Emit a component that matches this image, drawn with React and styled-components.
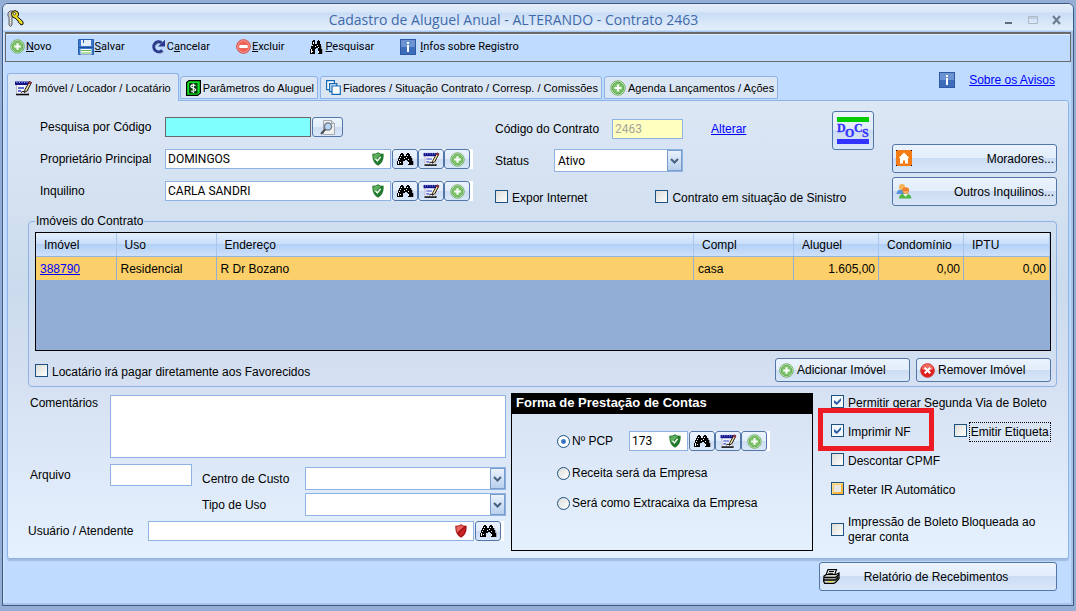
import React from 'react'
import { useState } from 'react';
import styled, { createGlobalStyle, css } from "styled-components";

const GlobalStyle = createGlobalStyle`
  *, *::after {
    box-sizing: border-box;
  }
  body {
    margin: 0;
    background: #94aed6;
    font-family: "Liberation Sans", Arial, sans-serif;
    font-size: 12px;
    line-height: 16px;
    color: #000;
  }
  button, input, select, textarea {
    font: inherit;
    color: inherit;
    margin: 0;
  }
  svg {
    display: block;
    flex: none;
  }
`;

/* ---------- window ---------- */

const Page = styled.div`
  min-height: 100vh;
  padding: 3px 2px 5px;
  display: flex;
  flex-direction: column;
`;

const Window = styled.main`
  flex: 1;
  display: flex;
  flex-direction: column;
  background: #bfdbff;
  border: 1px solid #3b5a82;
  border-radius: 6px 6px 0 0;
  box-shadow: inset -2px -2px 0 #a9c3e6, inset 1px 0 0 #d5e6fb;
  padding-bottom: 13px;
`;

const TitleBar = styled.header`
  height: 28px;
  display: grid;
  grid-template-columns: 18px 1fr 60px;
  align-items: center;
  padding: 0 11px 0 4px;
  border-radius: 5px 5px 0 0;
  background: linear-gradient(#e6effa 0, #d9e7f8 8px, #c9ddf6 9px, #e4eefb 26px, #a8c8f2 27px);
`;

const Title = styled.h1`
  margin: 0;
  padding-top: 3px;
  text-align: center;
  font-family: "Open Sans", sans-serif;
  font-size: 14px;
  font-weight: 400;
  line-height: 20px;
  color: #3e6aaa;
`;

const WindowControls = styled.div`
  display: flex;
  justify-content: flex-end;
  gap: 14px;
  padding-top: 3px;
`;

const ControlButton = styled.button`
  padding: 0;
  border: none;
  background: none;
`;

const Toolbar = styled.nav`
  height: 30px;
  margin: 0 2px;
  padding: 0 4px 2px;
  display: flex;
  align-items: center;
  gap: 26px;
  border: 1px solid #696969;
  border-top: 2px solid #696969;
  box-shadow: inset 0 1px 0 #e4effd;
`;

const ToolButton = styled.button`
  display: flex;
  align-items: center;
  gap: ${(props) => props.$gap || 1}px;
  padding: 0;
  border: none;
  background: none;
  font-family: Roboto, sans-serif;
  font-size: 11px;
`;

/* ---------- tabs ---------- */

const TabRow = styled.div`
  display: flex;
  align-items: flex-end;
  height: 38px;
  margin: 0 4px;
`;

const Tab = styled.button`
  display: flex;
  align-items: center;
  gap: 2px;
  height: 23px;
  margin: 0 2px 1px 0;
  padding: 0 3px 0 5px;
  border: 1px solid #8db2e3;
  border-radius: 3px 3px 0 0;
  background: #dbe6f4;
  font-size: 11px;
  ${(props) => props.$active && css`
    gap: 3px;
    height: 28px;
    margin: 0 1px -1px 0;
    padding: 0 7px;
    border-bottom: none;
    z-index: 1;
  `}
`;

const Notices = styled.div`
  display: flex;
  align-items: center;
  align-self: flex-start;
  gap: 14px;
  margin: 10px 14px 0 auto;
`;

const Link = styled.a`
  color: #0000ff;
  text-decoration: underline;
`;

const Panel = styled.section`
  margin: 0 4px 0;
  padding: 10px 11px 7px 20px;
  border: 1px solid #8db2e3;
  border-radius: 0 3px 3px 3px;
  background: linear-gradient(#dce7f5 0, #cbdbed 190px, #d4e0f1 270px, #e5f1fe 100%);
  box-shadow: 0 2px 1px #a3bbdc;
`;

const Label = styled.label`
  width: ${(props) => (props.$w ? `${props.$w}px` : "auto")};
  flex: none;
  white-space: nowrap;
`;

const Row = styled.div`
  display: flex;
  align-items: center;
  gap: ${(props) => props.$gap || 0}px;
`;

const TopForm = styled.div`
  display: grid;
  grid-template-columns: 455px 1fr 60px 165px;
  padding-left: 12px;
  height: 103px;
`;

const Column = styled.div`
  display: flex;
  flex-direction: column;
  gap: ${(props) => props.$gap}px;
  padding-top: ${(props) => props.$top || 0}px;
  min-width: 0;
`;

const CheckRow = styled(Row)`
  padding-top: 8px;
  white-space: nowrap;
`;

const Input = styled.input`
  width: ${(props) => (props.$w ? `${props.$w}px` : "100%")};
  height: ${(props) => props.$h || 20}px;
  padding: 0 2px;
  border: 1px solid #8db2e3;
  border-radius: 0;
  background: #fff;
  font-family: Roboto, sans-serif;
  outline: none;
  &:disabled {
    background: #ffffc0;
    color: #a5a59c;
  }
`;

const SearchInput = styled(Input)`
  background: #80ffff;
  border-color: #696969;
`;

const LookupBox = styled.div`
  display: flex;
  align-items: center;
  width: ${(props) => props.$w}px;
  height: 20px;
  padding-right: 6px;
  border: 1px solid #8db2e3;
  background: #fff;
  ${Input} {
    flex: 1;
    min-width: 0;
    height: 18px;
    border: none;
  }
`;

const ButtonStrip = styled.div`
  display: flex;
  padding-right: 3px;
  background: #fff;
`;

const Button = styled.button`
  display: flex;
  align-items: center;
  border: 1px solid #5376a9;
  border-radius: 3px;
  background: linear-gradient(#eaf3fe 0, #e3edfb 49%, #ccdcf2 50%, #d9e7f9 100%);
`;

const IconButton = styled(Button)`
  width: ${(props) => props.$w || 26}px;
  height: 20px;
  padding: 0;
  justify-content: center;
`;

const DocsButton = styled(Button)`
  width: 42px;
  height: 39px;
  padding: 0;
  justify-content: center;
`;

const WideButton = styled(Button)`
  height: 29px;
  padding: 0 2px 0 3px;
  justify-content: space-between;
  svg {
    margin-bottom: 2px;
  }
`;

const SmallButton = styled(Button)`
  width: 135px;
  height: 24px;
  padding: 0 3px;
  gap: 3px;
`;

const SelectWrap = styled.div`
  display: grid;
  width: ${(props) => (props.$w ? `${props.$w}px` : "100%")};
  height: 23px;
`;

const Select = styled.select`
  grid-area: 1 / 1;
  appearance: none;
  width: 100%;
  padding: 0 18px 0 3px;
  border: 1px solid #8db2e3;
  border-radius: 0;
  background: #fff;
  font-family: Roboto, sans-serif;
  outline: none;
`;

const SelectArrow = styled.span`
  grid-area: 1 / 1;
  justify-self: end;
  display: flex;
  align-items: center;
  justify-content: center;
  width: 15px;
  margin: 1px;
  border: 1px solid #7a9cc8;
  background: linear-gradient(#eaf2fc, #b9d0ee);
  pointer-events: none;
`;

const CheckLabel = styled.label`
  display: flex;
  align-items: flex-start;
  gap: 4px;
`;

const CheckText = styled.span`
  padding-top: 1px;
  line-height: 15px;
  outline: ${(props) => (props.$focused ? "1px dotted #000" : "none")};
  outline-offset: 1px;
`;

const Checkbox = styled.input.attrs({ type: "checkbox" })`
  appearance: none;
  flex: none;
  width: 13px;
  height: 13px;
  border: 1px solid #1c5180;
  background: linear-gradient(135deg, #dcdcd7, #fff);
  align-self: ${(props) => props.$align || "flex-start"};
  ${(props) => props.$hot && css`
    background: #e6e6e2;
    box-shadow: inset 1px 1px 0 #fddf94, inset -1px -1px 0 #f8b636, inset 2px 2px 0 #fbcb69, inset -2px -2px 0 #f8b636;
  `}
  &:checked {
    background: #f4f9ff;
  }
  &:checked::after {
    content: "";
    display: block;
    width: 7px;
    height: 7px;
    margin: 2px;
    background: #2f5fa8;
    clip-path: polygon(0 30%, 40% 62%, 100% 0, 100% 40%, 40% 100%, 0 70%);
  }
`;

const RadioLabel = styled.label`
  display: flex;
  align-items: center;
  gap: 2px;
`;

const Radio = styled.input.attrs({ type: "radio" })`
  appearance: none;
  width: 13px;
  height: 13px;
  border: 1px solid #1c5180;
  border-radius: 50%;
  background: linear-gradient(135deg, #dcdcd7, #fff);
  &:checked {
    background: radial-gradient(circle, #2a62b8 0, #4a82cc 2px, #fff 3px);
  }
`;

/* ---------- table ---------- */

const Group = styled.fieldset`
  margin: 0;
  padding: 4px 5px 4px 6px;
  min-width: 0;
  border: 1px solid #8db2e3;
  border-radius: 4px;
`;

const Legend = styled.legend`
  padding: 0 1px;
  line-height: 14px;
`;

const TableBox = styled.div`
  min-height: 119px;
  border: 1px solid #000;
  background: #92aed6;
`;

const Table = styled.table`
  width: 100%;
  border-collapse: collapse;
  table-layout: fixed;
`;

const Th = styled.th`
  width: ${(props) => (props.$w ? `${props.$w}px` : "auto")};
  height: 23px;
  padding: 2px 8px 0;
  text-align: left;
  font-weight: 400;
  border-right: 1px solid #a9c6ec;
  border-bottom: 1px solid #94b4e0;
  background: linear-gradient(#e3eefc 0, #c9defa 49%, #b2d0f6 50%, #cde0fa 100%);
`;

const Td = styled.td`
  height: 24px;
  padding: 2px 3px 0 4px;
  text-align: ${(props) => props.$align || "left"};
  border-right: 1px solid #92aed6;
  background: #fbd06a;
`;

const GroupFooter = styled.div`
  display: flex;
  align-items: center;
  gap: 6px;
  margin-top: 7px;
  ${CheckLabel} {
    margin-right: auto;
    padding-top: 4px;
  }
`;

/* ---------- lower part ---------- */

const Bottom = styled.div`
  display: grid;
  grid-template-columns: minmax(0, 478px) minmax(0, 302px) 1fr;
  column-gap: 5px;
  margin-top: 6px;
`;

const Comments = styled.textarea`
  flex: 1;
  height: 63px;
  resize: none;
  border: 1px solid #8db2e3;
  border-radius: 0;
  outline: none;
`;

const CommentRow = styled.div`
  display: flex;
  align-items: flex-start;
  padding: 2px 0 0 2px;
`;

const FileRow = styled.div`
  display: flex;
  align-items: flex-start;
  gap: 10px;
  padding: 6px 0 0 2px;
`;

const CostGrid = styled.div`
  flex: 1;
  display: grid;
  grid-template-columns: 103px 1fr;
  row-gap: 3px;
  align-items: center;
  padding-top: 3px;
`;

const UserRow = styled.div`
  display: flex;
  align-items: center;
  padding-top: 5px;
`;

const AccountBox = styled.section`
  border: 1px solid #000;
  height: 158px;
`;

const AccountTitle = styled.h2`
  margin: 0;
  padding: 0 4px;
  height: 20px;
  font-size: 13px;
  line-height: 18px;
  color: #fff;
  background: #000;
`;

const AccountOptions = styled.div`
  display: flex;
  flex-direction: column;
  gap: 14px;
  padding: 17px 0 0 45px;
`;

const Options = styled.div`
  display: flex;
  flex-direction: column;
  gap: 13px;
  padding: 2px 0 0 13px;
  > ${CheckLabel}:last-child {
    padding-top: 3px;
  }
`;

const Marked = styled.div`
  position: relative;
  &::after {
    content: "";
    position: absolute;
    left: -13px;
    top: -16px;
    width: 116px;
    height: 43px;
    border: 5px solid #ed1c24;
    pointer-events: none;
  }
`;

const Footer = styled.footer`
  display: flex;
  justify-content: flex-end;
  margin: 3px 16px 0;
`;

const ReportButton = styled(Button)`
  width: 238px;
  height: 29px;
  padding: 0 24px 0 3px;
  span {
    flex: 1;
    text-align: center;
  }
`;

/* ---------- icons ---------- */

const PlusIcon = ({ size = 15 }) => (
  <svg width={size} height={size} viewBox="0 0 16 16">
    <circle cx="8" cy="8" r="7.2" fill="#e3f2dd" stroke="#69ab5c" />
    <circle cx="8" cy="8" r="5.7" fill="#7cc268" stroke="#5aa84a" />
    <path d="M8 4.500v7M4.500 8h7" stroke="#fff" strokeWidth="2.200" />
  </svg>
);

const MinusIcon = () => (
  <svg width="15" height="15" viewBox="0 0 16 16">
    <circle cx="8" cy="8" r="7.300" fill="#e0463c" stroke="#d5493f" />
    <circle cx="8" cy="8" r="6.200" fill="#ee6156" stroke="#f9a9a2" />
    <rect x="3.500" y="6.500" width="9" height="3.200" rx="0.600" fill="#fff" />
  </svg>
);

const RemoveIcon = () => (
  <svg width="15" height="15" viewBox="0 0 16 16">
    <circle cx="8" cy="8" r="7.300" fill="#e01f1f" stroke="#c33" />
    <path d="M2 7a6 6 0 0 1 12 0q-6 2-12 0z" fill="#f46a62" />
    <path d="M5 5l6 6M11 5l-6 6" stroke="#fff" strokeWidth="2.200" />
  </svg>
);

const SaveIcon = () => (
  <svg width="16" height="16" viewBox="0 0 16 16">
    <path d="M0.500 0.500h15v15h-15z" fill="#3b78d0" stroke="#2a5cae" />
    <rect x="3" y="1" width="10" height="6" fill="#e3effb" />
    <path d="M5.500 1v3" stroke="#2a5cae" />
    <path d="M1 8.500h14" stroke="#1d4c98" />
    <rect x="2.500" y="10" width="11" height="5.500" fill="#fff" />
    <path d="M3 11.500h10M3 14h10" stroke="#62b84c" strokeWidth="1.200" />
  </svg>
);

const CancelIcon = () => (
  <svg width="15" height="15" viewBox="0 0 15 15">
    <path d="M11.200 11.200A5 5 0 1 1 10.500 3.600" fill="none" stroke="#9da7c4" strokeWidth="2.400" transform="translate(1 1)" />
    <path d="M11.200 11.200A5 5 0 1 1 10.500 3.600" fill="none" stroke="#2b3a8c" strokeWidth="2.800" />
    <path d="M7 7.500h7V0.800z" fill="#2b3a8c" />
  </svg>
);

const BinocularsIcon = ({ width = 17, height = 12, fit }) => (
  <svg width={width} height={height} viewBox="0 0 17 12" shapeRendering="crispEdges" preserveAspectRatio={fit}>
    <path d="M14 3h1v2h1v3h1v4h-3z" fill="#9aa0ad" />
    <path d="M3 1h1V0h2v1h1v2h2V1h1V0h2v1h1v2h1v2h1v3h1v4h-5V8h-1V7H8v1H6v4H0V8h1V5h1V3h1z" fill="#000" />
    <path d="M4 2h1v1H4zM3 4h1v1H3zM2 6h1v1H2zM1 8h1v3H1zM3 9h1v1H3zM10 2h1v1h-1zM9 4h1v1H9zM11 6h1v1h-1zM11 9h1v2h-1zM7 5h1v1H7z" fill="#fff" />
  </svg>
);

const InfoIcon = () => (
  <svg width="16" height="16" viewBox="0 0 16 16">
    <rect x="0.500" y="0.500" width="15" height="15" fill="#3d6cbb" stroke="#3059a5" />
    <rect x="1" y="1" width="14" height="7" fill="#6b93d2" />
    <path d="M7 3h2v2H7zM7 6h2v7H7z" fill="#fff" />
  </svg>
);

const FormIcon = ({ width = 17, height = 15 }) => (
  <svg width={width} height={height} viewBox="0 0 17 15">
    <path d="M1 3h12v11H1z" fill="#f2f2fa" />
    <path d="M13 5v9M1.500 4v9" stroke="#b9b9c8" />
    <path d="M0 1h14v3.500H0z" fill="#14148c" />
    <path d="M1.500 2h1M4 2h1M6.500 2h1M9 2h1M11.500 2h1" stroke="#b5b9f2" />
    <path d="M3 7.500h6M3 10.500h3" stroke="#2f45c8" strokeWidth="1.300" />
    <path d="M1 14h13" stroke="#000" strokeWidth="1.600" />
    <path d="M14.500 1l2 1-4.500 8.500-2.500 1.500.5-3z" fill="#f0dfa0" stroke="#000" strokeWidth="0.900" />
    <path d="M14.300 1l2.300 1.200-1 1.800-2.300-1.200z" fill="#a8283c" />
    <path d="M6 12q2-2 3.500-.5" stroke="#000" fill="none" />
  </svg>
);

const MoneyIcon = () => (
  <svg width="15" height="16" viewBox="0 0 15 16">
    <path d="M3 0.600h11.400V13L11.500 15.400H0.600V2.500z" fill="#12e022" stroke="#000" strokeWidth="1.200" />
    <rect x="3" y="3" width="8.500" height="10.500" fill="#0a3d10" />
    <path d="M9.500 5.800Q7 4 5.300 5.500T7.300 8.200 9 10.600 5 11M7.300 3.500v9.500" stroke="#fff" fill="none" strokeWidth="1.100" />
  </svg>
);

const CopiesIcon = () => (
  <svg width="15" height="15" viewBox="0 0 15 15" fill="#fff" stroke="#1469b5" strokeWidth="1.200">
    <path d="M0.600 0.600h7.800v9H0.600z" />
    <path d="M3.600 3.600h7.200v8H3.600z" fill="#d8ecff" />
    <path d="M6 6h8.300v8.300H6z" />
  </svg>
);

const PreviewIcon = () => (
  <svg width="16" height="15" viewBox="0 0 16 15">
    <path d="M3.500 0.500h8l3 3v11h-11z" fill="#f0f0f0" stroke="#a4a8ad" />
    <path d="M11.500 0.500v3h3" fill="#ddd" stroke="#a4a8ad" />
    <circle cx="8" cy="6.500" r="3.600" fill="#b6d3f2" stroke="#6d7784" strokeWidth="1.300" />
    <path d="M5.300 9.300L1 14" stroke="#4a4f58" strokeWidth="2" />
  </svg>
);

const ShieldIcon = ({ red }) => (
  <svg width="12" height="14" viewBox="0 0 12 14">
    <path d="M6 0.300Q8.500 2 11.600 1.800 12.300 10 6 13.700-.3 10 .4 1.800 3.500 2 6 .3z" fill={red ? "#a81414" : "#237a2d"} />
    <path d="M6 1.300Q3.500 2.800 1.400 2.700 1 6 2.300 8.500L9 2.400Q7.500 2.200 6 1.300z" fill={red ? "#e8655f" : "#62ae60"} />
    {red
      ? <path d="M6 12.300q4-3 4.300-8.500L4 9.500q.8 1.800 2 2.800z" fill="#cc2626" />
      : <path d="M3.500 6.700l1.900 2.200L8.600 4.800" stroke="#f2fbf0" strokeWidth="1.500" fill="none" />}
  </svg>
);

const HouseIcon = () => (
  <svg width="16" height="16" viewBox="0 0 16 16">
    <rect width="16" height="16" fill="#f57c14" />
    <path d="M0 0h1v1H0zM15 0h1v1h-1zM0 15h1v1H0zM15 15h1v1h-1z" fill="#000" />
    <path d="M8 2.500L2.800 8H4v5.500h3v-3h2v3h3V8h1.200z" fill="#fff" />
  </svg>
);

const PeopleIcon = () => (
  <svg width="16" height="16" viewBox="0 0 16 16">
    <path d="M0.500 11q.5-5 5-4.500 3 0 3.500 4.500z" fill="#5b93d8" />
    <circle cx="6" cy="4" r="3" fill="#f5b355" />
    <path d="M3 15.500q0-5 6-5t6.500 5z" fill="#4fb848" />
    <path d="M7 11l2.500 3L12 11z" fill="#e9f7e4" />
    <circle cx="9.800" cy="7.500" r="3.300" fill="#f07d2c" />
    <path d="M7 8q3 .8 5.300-.5-.5 3-2.600 3.200Q7.500 10.700 7 8z" fill="#f9b06a" />
  </svg>
);

const PrinterIcon = () => (
  <svg width="17" height="15" viewBox="0 0 17 15">
    <path d="M5 0.600h8.500L11.500 6H3z" fill="#fff" stroke="#000" strokeWidth="1.200" />
    <path d="M6 2.500h5M5.300 4.300h5" stroke="#000" />
    <path d="M1 7l2.500-1.500H13L16 4v5.500L13 13l-2 1.400H1.700L.6 12z" fill="#d4d4cc" stroke="#000" strokeWidth="1.200" />
    <path d="M1 8.500h11.500L16 5.500M1 11h11.500l3-3" stroke="#000" fill="none" strokeWidth="1.300" />
    <path d="M5 12.700h5" stroke="#e8e23a" strokeWidth="1.200" />
  </svg>
);

const KeysIcon = () => (
  <svg width="17" height="17" viewBox="0 0 17 17">
    <path d="M1 3l2-2h3l1 2v3L5 7v8L3.500 16.500 2 15V7.500L1 6z" fill="#c4c4c4" stroke="#555" strokeWidth="0.900" />
    <path d="M3.500 8v6" stroke="#fff" strokeDasharray="1 1" />
    <path d="M5 2l3-1.500L11 2l.5 3-1 1.700 5.500 5v2.500l-2 .8-1.500-2-1-.5-.5-1.700L8 8 5.500 7 4.500 4.500z" fill="#eadb20" stroke="#111" strokeWidth="1" />
    <circle cx="7.500" cy="3.700" r="1.200" fill="#fff" stroke="#111" strokeWidth="0.700" />
  </svg>
);

const DocsIcon = () => (
  <svg width="32" height="28" viewBox="0 0 32 28" fontFamily="Liberation Serif, serif" fontWeight="700" fontSize="12" fill="#3333ff" stroke="#3333ff" strokeWidth="0.3">
    <rect width="32" height="5" fill="#00cc00" stroke="none" />
    <rect y="22" width="32" height="5" stroke="none" />
    <text x="0" y="15">D</text>
    <text x="8" y="20">O</text>
    <text x="17" y="15">C</text>
    <text x="25" y="20">S</text>
  </svg>
);

const ArrowIcon = () => (
  <svg width="9" height="6" viewBox="0 0 9 6">
    <path d="M1 1l3.500 3.500L8 1" fill="none" stroke="#46617f" strokeWidth="2" />
  </svg>
);

/* ---------- parts ---------- */

const Check = ({ text, focused, ...rest }) => (
  <CheckLabel>
    <Checkbox {...rest} />
    <CheckText $focused={focused}>{text}</CheckText>
  </CheckLabel>
);

const Lookup = ({ id, width, value, empty, short, label }) => (
  <Row $gap={1}>
    <LookupBox $w={width}>
      <Input id={id} defaultValue={value} aria-label={label} />
      <ShieldIcon red={empty} />
    </LookupBox>
    <ButtonStrip>
      <IconButton aria-label="Pesquisar"><BinocularsIcon /></IconButton>
      {!short && <IconButton aria-label="Editar"><FormIcon height={14} /></IconButton>}
      {!short && <IconButton aria-label="Novo"><PlusIcon /></IconButton>}
    </ButtonStrip>
  </Row>
);

const DropDown = ({ id, width, options }) => (
  <SelectWrap $w={width}>
    <Select id={id}>
      {options.map((o) => <option key={o}>{o}</option>)}
    </Select>
    <SelectArrow><ArrowIcon /></SelectArrow>
  </SelectWrap>
);

const tabs = [
  { text: "Imóvel / Locador / Locatário", icon: <FormIcon height={16} /> },
  { text: "Parâmetros do Aluguel", icon: <MoneyIcon /> },
  { text: "Fiadores / Situação Contrato / Corresp. / Comissões", icon: <CopiesIcon /> },
  { text: "Agenda Lançamentos / Ações", icon: <PlusIcon size={16} /> },
];

const App = () => {
  const [tab, setTab] = useState(0);

  return (
    <Page>
      <GlobalStyle />
      <Window>
        <TitleBar>
          <KeysIcon />
          <Title>Cadastro de Aluguel Anual - ALTERANDO - Contrato 2463</Title>
          <WindowControls>
            <ControlButton aria-label="Minimizar">
              <svg width="10" height="10"><path d="M1 8h7" stroke="#5d6c82" strokeWidth="2" /></svg>
            </ControlButton>
            <ControlButton aria-label="Maximizar">
              <svg width="10" height="10"><path d="M0.500 1.500h9v7h-9zM0.500 3h9" stroke="#b0b9c6" fill="none" /></svg>
            </ControlButton>
            <ControlButton aria-label="Fechar">
              <svg width="10" height="10"><path d="M1 1l7 8M8 1L1 9" stroke="#6c7b91" strokeWidth="2" /></svg>
            </ControlButton>
          </WindowControls>
        </TitleBar>

        <Toolbar>
          <ToolButton><PlusIcon /><span><u>N</u>ovo</span></ToolButton>
          <ToolButton><SaveIcon /><span><u>S</u>alvar</span></ToolButton>
          <ToolButton><CancelIcon /><span>C<u>a</u>ncelar</span></ToolButton>
          <ToolButton><MinusIcon /><span><u>E</u>xcluir</span></ToolButton>
          <ToolButton $gap={2}><BinocularsIcon width={13} height={14} fit="none" /><span><u>P</u>esquisar</span></ToolButton>
          <ToolButton $gap={4}><InfoIcon /><span><u>I</u>nfos sobre Registro</span></ToolButton>
        </Toolbar>

        <TabRow>
          {tabs.map((t, i) => (
            <Tab key={t.text} $active={tab === i} onClick={() => setTab(i)}>
              {t.icon}
              <span>{t.text}</span>
            </Tab>
          ))}
          <Notices>
            <InfoIcon />
            <Link href="#avisos">Sobre os Avisos</Link>
          </Notices>
        </TabRow>

        <Panel>
          <TopForm>
            <Column $gap={12} $top={6}>
              <Row>
                <Label $w={125} htmlFor="codigo">Pesquisa por Código</Label>
                <Row $gap={1}>
                  <SearchInput id="codigo" $w={146} />
                  <IconButton $w={31} aria-label="Visualizar"><PreviewIcon /></IconButton>
                </Row>
              </Row>
              <Row>
                <Label $w={125} htmlFor="proprietario">Proprietário Principal</Label>
                <Lookup id="proprietario" width={226} value="DOMINGOS" />
              </Row>
              <Row>
                <Label $w={125} htmlFor="inquilino">Inquilino</Label>
                <Lookup id="inquilino" width={226} value="CARLA SANDRI" />
              </Row>
            </Column>

            <Column $gap={10} $top={8}>
              <Row>
                <Label $w={117} htmlFor="contrato">Código do Contrato</Label>
                <Row $gap={28}>
                  <Input id="contrato" $w={71} defaultValue="2463" disabled />
                  <Link href="#alterar">Alterar</Link>
                </Row>
              </Row>
              <Row>
                <Label $w={59} htmlFor="status">Status</Label>
                <DropDown id="status" width={129} options={["Ativo"]} />
              </Row>
              <CheckRow $gap={68}>
                <Check text="Expor Internet" />
                <Check text="Contrato em situação de Sinistro" />
              </CheckRow>
            </Column>

            <DocsButton aria-label="Docs"><DocsIcon /></DocsButton>

            <Column $gap={4} $top={33}>
              <WideButton><HouseIcon /><span>Moradores...</span></WideButton>
              <WideButton><PeopleIcon /><span>Outros Inquilinos...</span></WideButton>
            </Column>
          </TopForm>

          <Group>
            <Legend>Imóveis do Contrato</Legend>
            <TableBox>
              <Table>
                <thead>
                  <tr>
                    <Th $w={80}>Imóvel</Th>
                    <Th $w={100}>Uso</Th>
                    <Th>Endereço</Th>
                    <Th $w={100}>Compl</Th>
                    <Th $w={85}>Aluguel</Th>
                    <Th $w={85}>Condomínio</Th>
                    <Th $w={86}>IPTU</Th>
                  </tr>
                </thead>
                <tbody>
                  <tr>
                    <Td><Link href="#388790">388790</Link></Td>
                    <Td>Residencial</Td>
                    <Td>R Dr Bozano</Td>
                    <Td>casa</Td>
                    <Td $align="right">1.605,00</Td>
                    <Td $align="right">0,00</Td>
                    <Td $align="right">0,00</Td>
                  </tr>
                </tbody>
              </Table>
            </TableBox>
            <GroupFooter>
              <Check text="Locatário irá pagar diretamente aos Favorecidos" />
              <SmallButton><PlusIcon />Adicionar Imóvel</SmallButton>
              <SmallButton><RemoveIcon />Remover Imóvel</SmallButton>
            </GroupFooter>
          </Group>

          <Bottom>
            <div>
              <CommentRow>
                <Label $w={80} htmlFor="comentarios">Comentários</Label>
                <Comments id="comentarios" />
              </CommentRow>
              <FileRow>
                <Row>
                  <Label $w={80} htmlFor="arquivo">Arquivo</Label>
                  <Input id="arquivo" $w={82} $h={22} />
                </Row>
                <CostGrid>
                  <Label htmlFor="custo">Centro de Custo</Label>
                  <DropDown id="custo" options={[""]} />
                  <Label htmlFor="uso">Tipo de Uso</Label>
                  <DropDown id="uso" options={[""]} />
                </CostGrid>
              </FileRow>
              <UserRow>
                <Label $w={120} htmlFor="usuario">Usuário / Atendente</Label>
                <Lookup id="usuario" width={326} empty short />
              </UserRow>
            </div>

            <AccountBox>
              <AccountTitle>Forma de Prestação de Contas</AccountTitle>
              <AccountOptions>
                <Row>
                  <Label as="div" $w={72}>
                    <RadioLabel><Radio name="forma" defaultChecked />Nº PCP</RadioLabel>
                  </Label>
                  <Lookup id="pcp" width={59} value="173" label="Nº PCP" />
                </Row>
                <RadioLabel><Radio name="forma" />Receita será da Empresa</RadioLabel>
                <RadioLabel><Radio name="forma" />Será como Extracaixa da Empresa</RadioLabel>
              </AccountOptions>
            </AccountBox>

            <Options>
              <Check text="Permitir gerar Segunda Via de Boleto" defaultChecked />
              <Row $gap={43}>
                <Marked><Check text="Imprimir NF" defaultChecked /></Marked>
                <Check text="Emitir Etiqueta" focused />
              </Row>
              <Check text="Descontar CPMF" />
              <Check text="Reter IR Automático" $hot />
              <Check text="Impressão de Boleto Bloqueada ao gerar conta" $align="center" />
            </Options>
          </Bottom>
        </Panel>

        <Footer>
          <ReportButton><PrinterIcon /><span>Relatório de Recebimentos</span></ReportButton>
        </Footer>
      </Window>
    </Page>
  )
}

export default App
